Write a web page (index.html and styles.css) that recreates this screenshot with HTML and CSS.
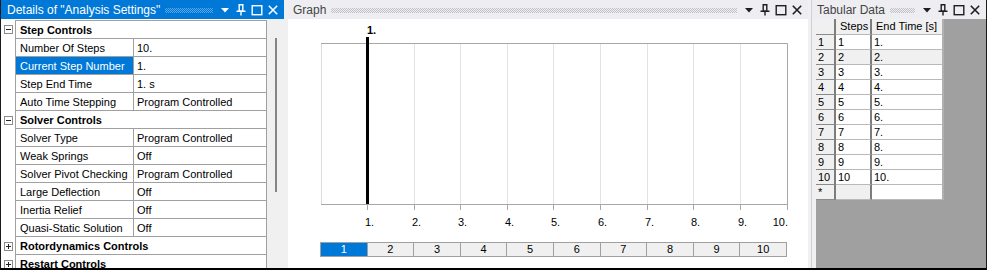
FILE: index.html
```html
<!DOCTYPE html>
<html lang="en">
<head>
  <meta charset="UTF-8">
  <title>Analysis Settings</title>
  <link rel="stylesheet" href="styles.css">
</head>
<body>

  <!-- shared header icons -->
  <svg class="defs" width="0" height="0">
    <symbol id="i-drop" viewBox="0 0 12 12"><path d="M2 4h8l-4 4.5z" fill="currentColor"/></symbol>
    <symbol id="i-pin" viewBox="0 0 12 12"><path d="M4.2 0.8h3.6v6.2H4.2z M1.5 7.3h9 M6 7.3v4.2" fill="none" stroke="currentColor" stroke-width="1.4"/></symbol>
    <symbol id="i-max" viewBox="0 0 12 12"><rect x="1.2" y="1.7" width="9.6" height="9" fill="none" stroke="currentColor" stroke-width="1.4"/></symbol>
    <symbol id="i-close" viewBox="0 0 12 12"><path d="M1.8 1.8l8.4 8.4M10.2 1.8l-8.4 8.4" fill="none" stroke="currentColor" stroke-width="1.6"/></symbol>
  </svg>

  <div class="window">

    <!-- Details -->
    <section class="panel details">
      <header class="panel-head active">
        <span class="title">Details of "Analysis Settings"</span>
        <span class="grip"></span>
        <span class="tools">
          <svg><use href="#i-drop"/></svg>
          <svg><use href="#i-pin"/></svg>
          <svg><use href="#i-max"/></svg>
          <svg><use href="#i-close"/></svg>
        </span>
      </header>
      <div class="details-body">
        <div class="props">
          <div class="row section first">
            <div class="exp"><span class="box minus"></span></div>
            <div class="label">Step Controls</div>
          </div>
          <div class="row"><div class="exp"></div><div class="name">Number Of Steps</div><div class="value">10.</div></div>
          <div class="row"><div class="exp"></div><div class="name selected">Current Step Number</div><div class="value">1.</div></div>
          <div class="row"><div class="exp"></div><div class="name">Step End Time</div><div class="value">1. s</div></div>
          <div class="row"><div class="exp"></div><div class="name">Auto Time Stepping</div><div class="value">Program Controlled</div></div>
          <div class="row section">
            <div class="exp"><span class="box minus"></span></div>
            <div class="label">Solver Controls</div>
          </div>
          <div class="row"><div class="exp"></div><div class="name">Solver Type</div><div class="value">Program Controlled</div></div>
          <div class="row"><div class="exp"></div><div class="name">Weak Springs</div><div class="value">Off</div></div>
          <div class="row"><div class="exp"></div><div class="name">Solver Pivot Checking</div><div class="value">Program Controlled</div></div>
          <div class="row"><div class="exp"></div><div class="name">Large Deflection</div><div class="value">Off</div></div>
          <div class="row"><div class="exp"></div><div class="name">Inertia Relief</div><div class="value">Off</div></div>
          <div class="row"><div class="exp"></div><div class="name">Quasi-Static Solution</div><div class="value">Off</div></div>
          <div class="row section">
            <div class="exp"><span class="box plus"></span></div>
            <div class="label">Rotordynamics Controls</div>
          </div>
          <div class="row section">
            <div class="exp"><span class="box plus"></span></div>
            <div class="label">Restart Controls</div>
          </div>
        </div>
        <div class="scroll"><div class="thumb"></div></div>
      </div>
    </section>

    <div class="splitter"></div>

    <!-- Graph -->
    <section class="panel graph">
      <header class="panel-head">
        <span class="title">Graph</span>
        <span class="grip"></span>
        <span class="tools">
          <svg><use href="#i-drop"/></svg>
          <svg><use href="#i-pin"/></svg>
          <svg><use href="#i-max"/></svg>
          <svg><use href="#i-close"/></svg>
        </span>
      </header>
      <div class="graph-body">
        <svg class="chart" width="520" height="218" viewBox="0 0 520 218">
          <g class="grid-lines">
            <path d="M79.5 24v161M126.5 24v161M172.5 24v161M219.5 24v161M265.5 24v161M312.5 24v161M359.5 24v161M405.5 24v161M452.5 24v161"/>
          </g>
          <path class="frame-left" d="M33.5 24v161"/>
          <path class="frame" d="M33 24.5h466.5v161M33 185.5h466"/>
          <path class="ticks" d="M79.5 185v6M126.5 185v6M172.5 185v6M219.5 185v6M265.5 185v6M312.5 185v6M359.5 185v6M405.5 185v6M452.5 185v6M499.5 185v6"/>
          <rect class="bar" x="78" y="18" width="3" height="167"/>
          <text class="bar-label" x="79" y="15">1.</text>
          <g class="tick-labels">
            <text x="77" y="207">1.</text>
            <text x="124" y="207">2.</text>
            <text x="170" y="207">3.</text>
            <text x="217" y="207">4.</text>
            <text x="263" y="207">5.</text>
            <text x="310" y="207">6.</text>
            <text x="357" y="207">7.</text>
            <text x="403" y="207">8.</text>
            <text x="450" y="207">9.</text>
            <text x="500" y="207" text-anchor="end">10.</text>
          </g>
        </svg>
        <div class="steps">
          <span class="current">1</span>
          <span>2</span>
          <span>3</span>
          <span>4</span>
          <span>5</span>
          <span>6</span>
          <span>7</span>
          <span>8</span>
          <span>9</span>
          <span>10</span>
        </div>
      </div>
    </section>

    <div class="splitter line"></div>

    <!-- Tabular Data -->
    <section class="panel tabular">
      <header class="panel-head">
        <span class="title">Tabular Data</span>
        <span class="grip"></span>
        <span class="tools">
          <svg><use href="#i-drop"/></svg>
          <svg><use href="#i-pin"/></svg>
          <svg><use href="#i-max"/></svg>
          <svg><use href="#i-close"/></svg>
        </span>
      </header>
      <div class="tab-body">
        <div class="table">
          <div class="hd rh"></div><div class="hd">Steps</div><div class="hd">End Time [s]</div>
          <div class="rh">1</div><div>1</div><div>1.</div>
          <div class="rh">2</div><div class="hl">2</div><div class="hl">2.</div>
          <div class="rh">3</div><div>3</div><div>3.</div>
          <div class="rh">4</div><div>4</div><div>4.</div>
          <div class="rh">5</div><div>5</div><div>5.</div>
          <div class="rh">6</div><div>6</div><div>6.</div>
          <div class="rh">7</div><div>7</div><div>7.</div>
          <div class="rh">8</div><div>8</div><div>8.</div>
          <div class="rh">9</div><div>9</div><div>9.</div>
          <div class="rh">10</div><div>10</div><div>10.</div>
          <div class="rh">*</div><div class="hl"></div><div></div>
        </div>
      </div>
    </section>

  </div>

</body>
</html>
```

FILE: styles.css
```css
body {
  margin: 0;
  font-family: "Liberation Sans", Arial, sans-serif;
  font-size: 11px;
  color: #000;
  background: #fff;
}

.defs {
  position: absolute;
  width: 0;
  height: 0;
}

.window {
  display: flex;
  width: 987px;
  height: 270px;
  box-sizing: border-box;
  border-left: 1px solid #1a1a1a;
  border-right: 1px solid #1a1a1a;
  border-bottom: 2px solid #000;
  background: #f0f0f0;
  overflow: hidden;
}

.panel {
  display: flex;
  flex-direction: column;
  flex: none;
  overflow: hidden;
}

.details { width: 283px; }
.graph { width: 520px; background: #fff; }
.tabular { width: 174px; }

.splitter {
  width: 4px;
  flex: none;
  background: #f0f0f0;
}

.splitter.line {
  box-sizing: border-box;
  border-right: 1px solid #cdd1da;
}

/* panel headers */
.panel-head {
  display: flex;
  align-items: center;
  height: 19px;
  flex: none;
  padding: 0 3px 0 5px;
  background: #eeeef2;
  color: #444;
  font-size: 12px;
}

.panel-head.active {
  padding-left: 6px;
  background: #0078d7;
  color: #fff;
}

.title {
  white-space: nowrap;
}

.grip {
  flex: 1;
  height: 5px;
  margin: 1px 4px 0 5px;
  background-image: conic-gradient(#c2c2c8 0 25%, transparent 0 50%, #c2c2c8 0 75%, transparent 0);
  background-size: 2px 2px;
}

.active .grip {
  background-image: conic-gradient(#5aa6e6 0 25%, transparent 0 50%, #5aa6e6 0 75%, transparent 0);
}

.tools {
  display: flex;
  color: #1e1e1e;
}

.active .tools { color: #fff; }

.tools svg {
  width: 12px;
  height: 12px;
  padding: 0 2px;
}

/* details grid */
.details-body {
  display: flex;
  flex: 1;
  background: #fff;
}

.props {
  width: 266px;
  padding-top: 1px;
}

.row {
  display: flex;
  height: 18px;
}

.row > div {
  box-sizing: border-box;
  padding-top: 1px;
  line-height: 17px;
  white-space: nowrap;
  overflow: hidden;
}

.row.first { height: 19px; }
.row.first .label { border-top: 1px solid #a0a0a0; }

.row > .exp {
  padding-top: 0;
}

.exp {
  width: 14px;
  display: flex;
  align-items: center;
  justify-content: center;
}

.name,
.label {
  border-left: 1px solid #a0a0a0;
}

.name {
  width: 119px;
  padding-left: 4px;
  border-right: 1px solid #a0a0a0;
  border-bottom: 1px solid #a0a0a0;
}

.name.selected {
  background: #0078d7;
  color: #fff;
}

.value {
  width: 133px;
  padding-left: 3px;
  border-right: 1px solid #a0a0a0;
  border-bottom: 1px solid #a0a0a0;
}

.label {
  width: 252px;
  padding-left: 4px;
  font-weight: bold;
  border-right: 1px solid #a0a0a0;
  border-bottom: 1px solid #a0a0a0;
}

.box {
  position: relative;
  width: 7px;
  height: 7px;
  border: 1px solid #8c8c8c;
  background: #fff;
}

.box::before,
.box.plus::after {
  content: "";
  position: absolute;
  background: #222;
}

.box::before {
  left: 1px;
  top: 3px;
  width: 5px;
  height: 1px;
}

.box.plus::after {
  left: 3px;
  top: 1px;
  width: 1px;
  height: 5px;
}

.scroll {
  width: 17px;
  background: #f0f0f0;
}

.thumb {
  width: 2px;
  height: 154px;
  margin: 19px 0 0 8px;
  background: #858585;
}

/* graph */
.graph-body {
  display: flex;
  flex-direction: column;
  flex: 1;
}

.chart {
  display: block;
  font-family: "Liberation Sans", Arial, sans-serif;
  font-size: 11px;
}

.grid-lines path {
  stroke: #e3e3e3;
  fill: none;
}

.frame-left {
  stroke: #dcdcdc;
  fill: none;
}

.frame {
  stroke: #a8a8a8;
  fill: none;
}

.ticks {
  stroke: #a8a8a8;
  fill: none;
}

.bar { fill: #000; }

.bar-label {
  font-weight: bold;
}

.steps {
  display: flex;
  width: 467px;
  height: 15px;
  margin: 5px 0 0 32px;
  box-sizing: border-box;
  border: 1px solid #a0a0a0;
}

.steps span {
  flex: 1;
  text-align: center;
  line-height: 13px;
  background: #f0f0f0;
  border-left: 1px solid #a0a0a0;
}

.steps span:first-child { border-left: none; }

.steps span.current {
  background: #0078d7;
  color: #fff;
}

/* tabular */
.tab-body {
  flex: 1;
  display: flex;
  align-items: flex-start;
  background: #a0a0a0;
  border-left: 4px solid #f0f0f0;
}

.table {
  display: grid;
  grid-template-columns: 20px 36px 72px;
  grid-template-rows: 16px;
  grid-auto-rows: 15px;
}

.table > div {
  box-sizing: border-box;
  padding-left: 2px;
  line-height: 14px;
  background: #fff;
  border-right: 2px solid #7d7d7d;
  border-bottom: 1px solid #b9b9b9;
  white-space: nowrap;
}

.table > div:nth-child(3n) {
  border-right-color: #b0b0b0;
}

.table > .hd {
  background: #f0f0f0;
  padding-left: 4px;
  line-height: 15px;
}

.table > .rh {
  background: #f0f0f0;
  border-bottom-color: #8a8a8a;
}

.table > .hl {
  background: #f0f0f0;
}
```
